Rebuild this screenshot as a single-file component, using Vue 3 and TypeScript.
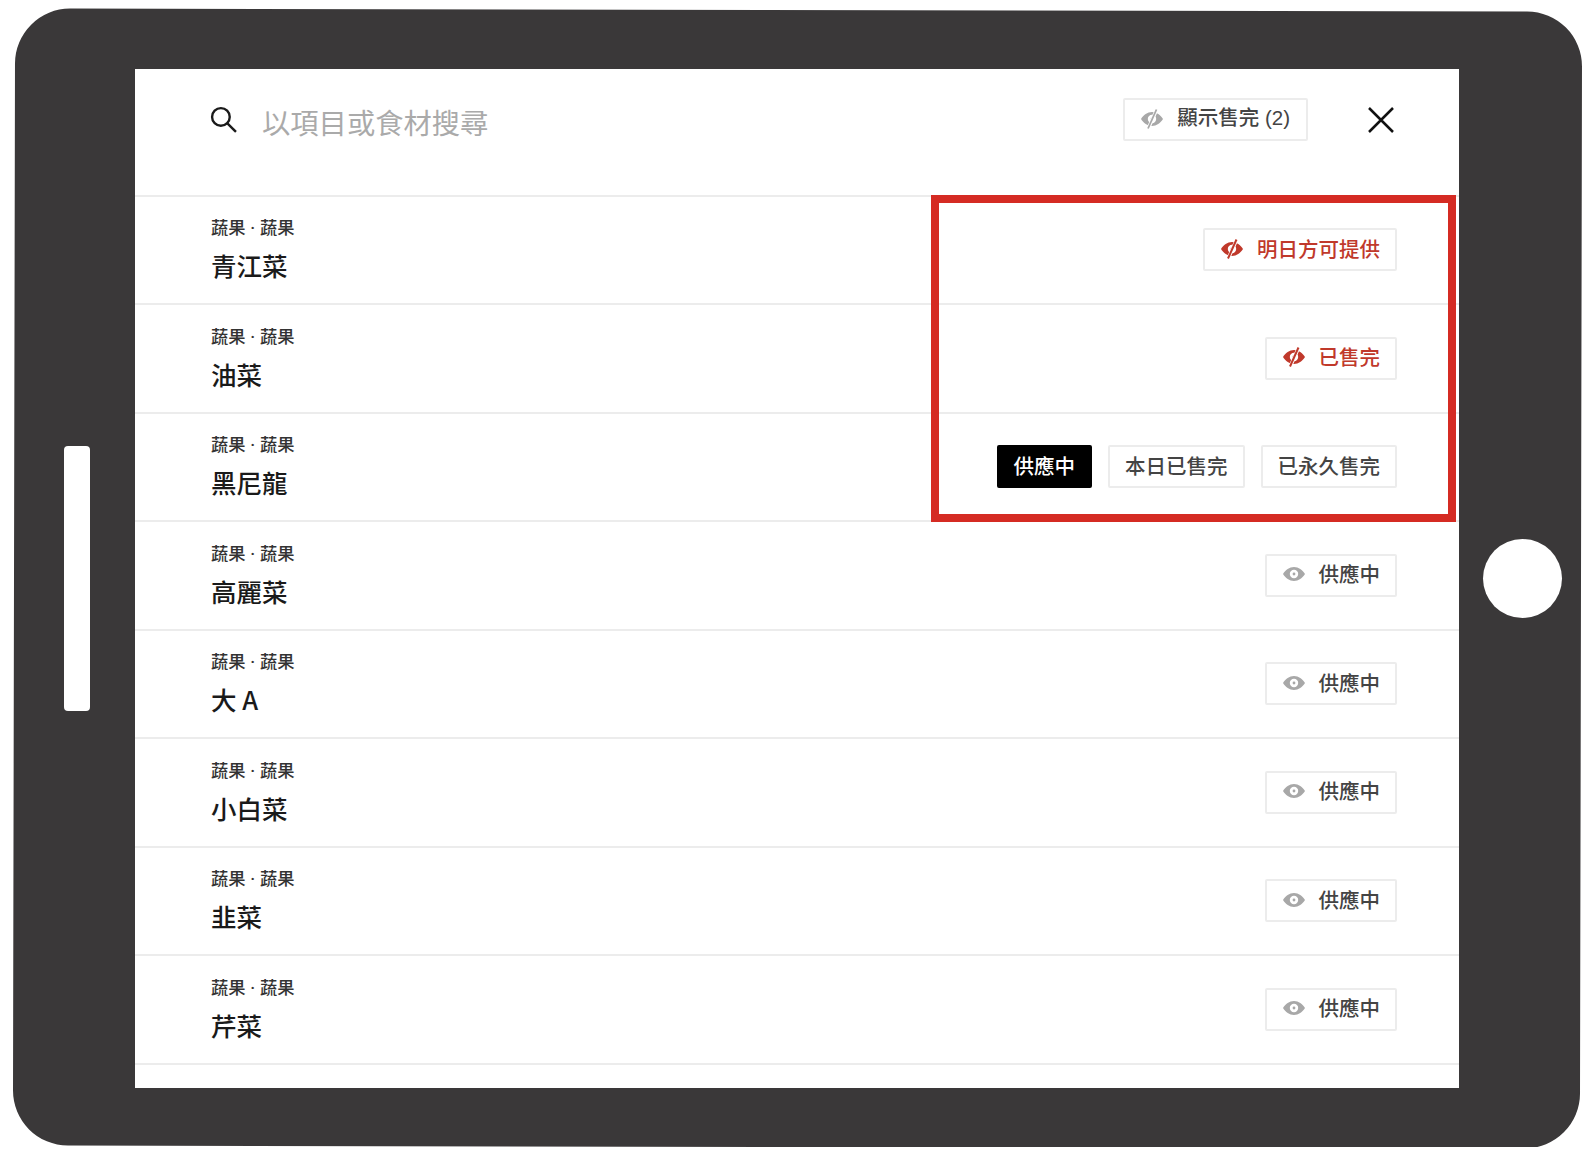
<script setup lang="ts">
type Status = 'normal' | 'tomorrow' | 'soldout' | 'choose'
interface Item { name: string; status: Status }
const items: Item[] = [
  { name: '青江菜', status: 'tomorrow' },
  { name: '油菜', status: 'soldout' },
  { name: '黑尼龍', status: 'choose' },
  { name: '高麗菜', status: 'normal' },
  { name: '大 A', status: 'normal' },
  { name: '小白菜', status: 'normal' },
  { name: '韭菜', status: 'normal' },
  { name: '芹菜', status: 'normal' },
]
const labels: Record<string, string> = { normal: '供應中', tomorrow: '明日方可提供', soldout: '已售完' }
const eye = 'M12 5C7.4 5 3.5 7.9 1 12c2.5 4.1 6.4 7 11 7s8.500-2.900 11-7c-2.500-4.100-6.400-7-11-7zm0 11.200A4.200 4.200 0 1 1 12 7.800a4.200 4.200 0 0 1 0 8.400zm0-5.600a1.400 1.400 0 1 0 0 2.800 1.400 1.400 0 0 0 0-2.800z'
</script>

<template>
  <div class="device">
    <div class="side-left"><div class="bar"></div></div>
    <main class="screen">
      <header class="head">
        <svg class="search" viewBox="0 0 26 26" fill="none" stroke="#1a1a1a" stroke-width="2.300">
          <circle cx="10.500" cy="10.500" r="8.500" />
          <path d="M16.500 16.500L25 25" />
        </svg>
        <span class="placeholder">以項目或食材搜尋</span>
        <button class="btn toggle">
          <svg class="ico" viewBox="0 0 24 24">
            <path fill="#a8a8a8" fill-rule="evenodd" :d="eye" />
            <path d="M16.500 3L8 22" stroke="#fff" stroke-width="3.500" />
            <path d="M16.500 2.500L8 21.500" stroke="#a8a8a8" stroke-width="1.800" />
          </svg>
          <span>顯示售完 (2)</span>
        </button>
        <svg class="close" viewBox="0 0 26 26" fill="none" stroke="#111" stroke-width="2.500">
          <path d="M1 1L25 25M25 1L1 25" />
        </svg>
      </header>
      <ul class="list">
        <li v-for="item in items" :key="item.name" class="row">
          <div class="names">
            <span class="cat">蔬果 · 蔬果</span>
            <span class="name">{{ item.name }}</span>
          </div>
          <div v-if="item.status === 'choose'" class="choices">
            <button class="btn black">供應中</button>
            <button class="btn">本日已售完</button>
            <button class="btn">已永久售完</button>
          </div>
          <button v-else class="btn" :class="{ red: item.status !== 'normal' }">
            <svg class="ico" viewBox="0 0 24 24">
              <template v-if="item.status === 'normal'">
                <path fill="#a8a8a8" fill-rule="evenodd" :d="eye" />
              </template>
              <template v-else>
                <path fill="#c0392b" fill-rule="evenodd" :d="eye" />
                <path d="M16.500 3L8 22" stroke="#fff" stroke-width="3.500" />
                <path d="M16.500 2.500L8 21.500" stroke="#c0392b" stroke-width="2" />
              </template>
            </svg>
            <span class="label">{{ labels[item.status] }}</span>
          </button>
        </li>
      </ul>
      <div class="highlight"></div>
    </main>
    <div class="side-right"><div class="home"></div></div>
  </div>
</template>

<style>
html, body { background: #fff; margin: 0; }
</style>

<style scoped>
* { box-sizing: border-box; }
.device {
  position: relative;
  display: flex;
  width: 1567px;
  height: 1137px;
  margin: 9.500px 0 0 14px;
  font-family: "Noto Sans CJK TC", "Noto Sans", sans-serif;
}
.device::before {
  content: "";
  position: absolute;
  inset: 0;
  background: #3a3839;
  border-radius: 55px;
  transform: rotate(0.11deg);
}
.side-left, .side-right {
  position: relative;
  display: flex;
  align-items: center;
  justify-content: center;
}
.side-left { width: 121px; padding-left: 5px; }
.side-right { width: 122px; padding-left: 5px; }
.bar { width: 26.500px; height: 265px; background: #fff; border-radius: 4px; }
.home { width: 79px; height: 79px; background: #fff; border-radius: 50%; }
.screen {
  position: relative;
  width: 1324px;
  height: 1019px;
  margin-top: 59.500px;
  background: #fff;
  overflow: hidden;
}
.head {
  display: flex;
  align-items: center;
  height: 127.500px;
  padding: 0 65px 24.500px 75px;
  border-bottom: 2px solid #ececec;
}
.search { width: 27px; height: 27px; flex: none; }
.placeholder { margin-left: 25px; margin-top: 5.400px; font-size: 28.300px; line-height: 40px; color: #aaa; }
.close { width: 26px; height: 26px; flex: none; }
.list { list-style: none; margin: 0; padding: 0; }
.row {
  display: flex;
  align-items: center;
  justify-content: space-between;
  height: 108.500px;
  padding: 0 62px 0 76px;
  border-bottom: 2px solid #ececec;
}
.names { display: flex; flex-direction: column; }
.cat {
  font-family: "Roboto", "Noto Sans CJK TC", sans-serif;
  font-size: 17.300px;
  line-height: 24px;
  word-spacing: 0.500px;
  color: #333;
  font-weight: 500;
}
.name { font-size: 25.500px; line-height: 36px; color: #1a1a1a; margin-top: 7px; font-weight: 500; }
.choices { display: flex; gap: 16px; }
.btn {
  display: inline-flex;
  align-items: center;
  justify-content: center;
  gap: 13px;
  height: 43px;
  padding: 0 15px 4px;
  background: #fff;
  border: 2px solid #ececec;
  border-radius: 2px;
  font: inherit;
  font-size: 20.500px;
  font-weight: 500;
  line-height: 28px;
  color: #444;
}
.btn .ico { margin-top: 2px; }
.btn.red { color: #c0392b; }
.btn.black { background: #000; border-color: #000; color: #fff; }
.btn.toggle {
  margin-left: auto;
  margin-right: 60px;
  padding: 0 16px 4px 15px;
  font-family: "Liberation Sans", "Noto Sans CJK TC", sans-serif;
}
.ico { width: 24px; height: 24px; flex: none; }
.highlight {
  position: absolute;
  left: 796px;
  top: 125.500px;
  width: 525px;
  height: 327.500px;
  border: 8.500px solid #d52b23;
}
</style>
